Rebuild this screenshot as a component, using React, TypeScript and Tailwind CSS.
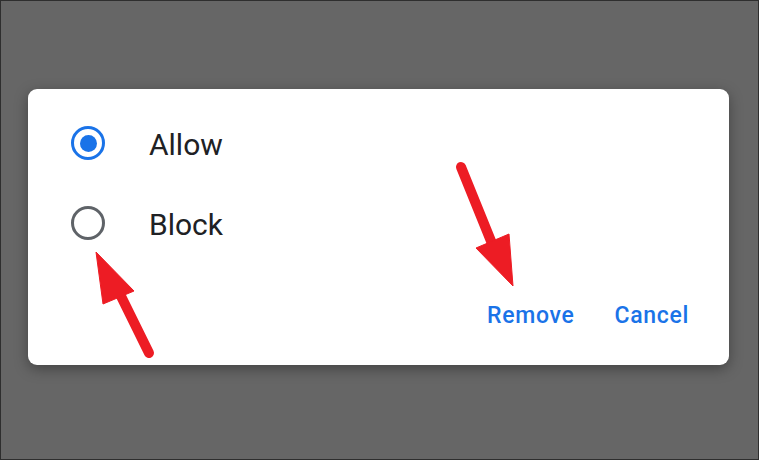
const Radio = ({ checked }: { checked: boolean }) => (
  <div
    className={`w-[34px] h-[34px] rounded-full border-[3.5px] flex items-center justify-center ${
      checked ? "border-[#1a73e8]" : "border-[#5f6368]"
    }`}
  >
    {checked && <div className="w-[17px] h-[17px] rounded-full bg-[#1a73e8]" />}
  </div>
);

const Arrows = () => (
  <svg className="absolute inset-0 pointer-events-none" width="759" height="460" viewBox="0 0 759 460">
    <g fill="#ed1c24" stroke="#ed1c24">
      <line x1="148" y1="352" x2="115" y2="285" strokeWidth="10" strokeLinecap="round" />
      <polygon points="95,251 102,303 133,290" strokeWidth="1" strokeLinejoin="round" />
      <line x1="460" y1="166" x2="492" y2="245" strokeWidth="10" strokeLinecap="round" />
      <polygon points="512,285 475,247 508,233" strokeWidth="1" strokeLinejoin="round" />
    </g>
  </svg>
);

export default function App() {
  return (
    <div
      className="relative w-[759px] h-[460px] bg-[#666666] border border-[#2e2e2e] overflow-hidden"
      style={{ fontFamily: "Roboto, 'Liberation Sans', sans-serif" }}
    >
      <div className="absolute left-[27px] top-[88px] w-[701px] h-[276px] bg-white rounded-[9px] shadow-[0_4px_14px_rgba(0,0,0,0.35)] flex flex-col pt-[14px]">
        <div className="flex items-center h-[80px] pl-[43px] gap-[44px]">
          <Radio checked />
          <span className="text-[30px] text-[#202124] leading-none mt-[3px]">Allow</span>
        </div>
        <div className="flex items-center h-[80px] pl-[43px] gap-[44px]">
          <Radio checked={false} />
          <span className="text-[30px] text-[#202124] leading-none mt-[3px]">Block</span>
        </div>
        <div className="flex justify-end items-center gap-[40px] pr-[40px] mt-[41px]">
          <button className="text-[23px] font-medium tracking-[0.03em] text-[#1a73e8] leading-none">Remove</button>
          <button className="text-[23px] font-medium tracking-[0.03em] text-[#1a73e8] leading-none">Cancel</button>
        </div>
      </div>
      <Arrows />
    </div>
  );
}
